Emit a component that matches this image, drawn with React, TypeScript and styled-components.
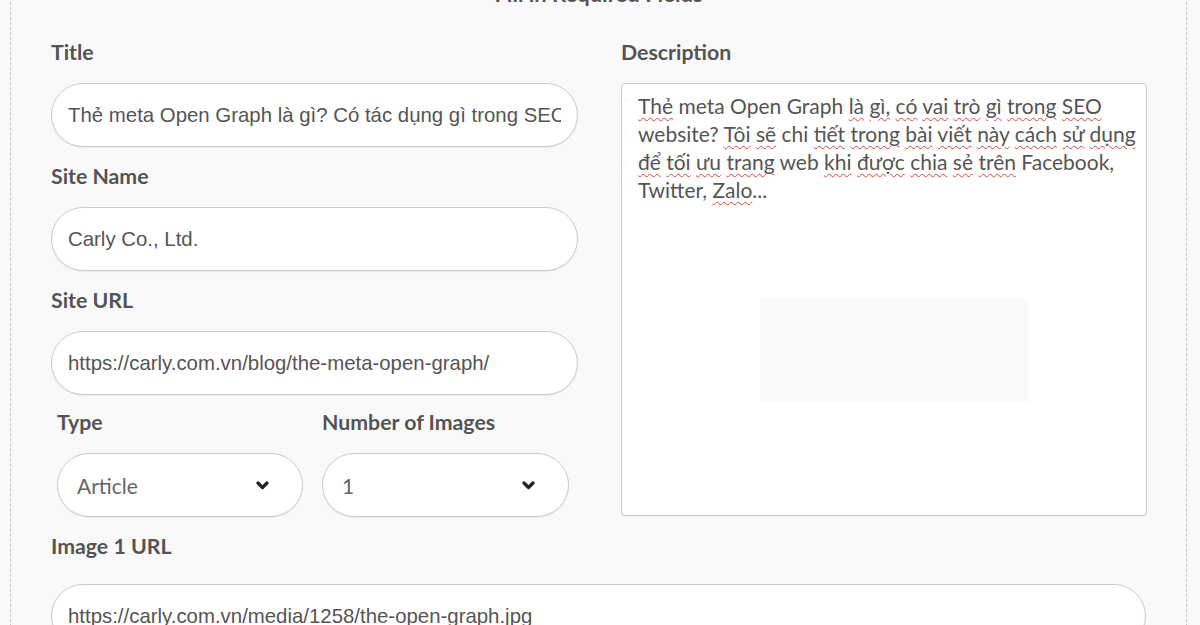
import React from "react";
import styled, { createGlobalStyle } from "styled-components";

const GlobalStyle = createGlobalStyle`
  html, body {
    margin: 0;
    padding: 0;
    background: #f9f9f9;
    overflow: hidden;
  }
  * { box-sizing: border-box; }
`;

const Page = styled.div`
  min-height: 625px;
  padding: 0 13px 0 10px;
  background: #f9f9f9;
`;

const Frame = styled.section`
  margin-top: -18px;
  min-height: 700px;
  border-left: 1.5px dashed #c4c4c4;
  border-right: 1.5px dashed #c4c4c4;
  padding: 0 40px 0 40px;
`;

const Heading = styled.h2`
  margin: 0;
  height: 58px;
  font-family: Lato, "Open Sans", sans-serif;
  font-weight: 700;
  font-size: 22px;
  line-height: 24px;
  color: #555;
  text-align: center;
`;

const Grid = styled.div`
  display: grid;
  grid-template-columns: 527px 526px;
  column-gap: 43px;
`;

const Column = styled.div`
  display: flex;
  flex-direction: column;
`;

const Field = styled.div<{ $top?: number }>`
  display: flex;
  flex-direction: column;
  margin-top: ${(p) => p.$top ?? 0}px;
`;

const Label = styled.label<{ $gap?: number }>`
  display: block;
  font-family: Lato, "Open Sans", sans-serif;
  font-weight: 700;
  font-size: 21.3px;
  line-height: 24px;
  color: #545454;
  margin-bottom: ${(p) => p.$gap ?? 19}px;
`;

const TextInput = styled.input`
  width: 100%;
  height: 64px;
  border: 1px solid #cbcbcb;
  border-radius: 32px;
  background: #fff;
  box-shadow: 0 1px 1px rgba(0, 0, 0, 0.06);
  padding: 0 16px 0 16px;
  font-family: "Liberation Sans", Arial, sans-serif;
  font-size: 20.4px;
  color: #555;
  outline: none;
`;

const SelectRow = styled.div`
  display: grid;
  grid-template-columns: 246px 247px;
  column-gap: 19px;
  padding-left: 6px;
  margin-top: 15px;
`;

const SelectBox = styled.div`
  height: 64px;
  border: 1px solid #cbcbcb;
  border-radius: 32px;
  background: #fff;
  box-shadow: 0 1px 1px rgba(0, 0, 0, 0.06);
  display: flex;
  align-items: center;
  justify-content: space-between;
  padding: 0 33px 0 19px;
  font-family: Lato, "Open Sans", sans-serif;
  font-size: 21px;
  color: #666;
`;

const ChevronSvg = styled.svg`
  width: 13px;
  height: 9px;
  flex: none;
`;

function Chevron() {
  return (
    <ChevronSvg viewBox="0 0 13 9" aria-hidden="true">
      <path
        d="M2 2 L6.5 6.5 L11 2"
        fill="none"
        stroke="#222"
        strokeWidth="3.2"
        strokeLinecap="round"
        strokeLinejoin="round"
      />
    </ChevronSvg>
  );
}

const TextArea = styled.div`
  position: relative;
  height: 433px;
  border: 1px solid #cbcbcb;
  border-radius: 4px;
  background: #fff;
  box-shadow: 0 1px 1px rgba(0, 0, 0, 0.05);
  padding: 8px 16px;
  font-family: Lato, "Open Sans", sans-serif;
  font-size: 21px;
  line-height: 28px;
  color: #555;
`;

const Line = styled.div`
  white-space: nowrap;
`;

const Misspelled = styled.span`
  text-decoration: underline wavy #e2403a;
  text-decoration-thickness: 1px;
  text-underline-offset: 3px;
`;

const Ghost = styled.div`
  position: absolute;
  left: 138px;
  top: 214px;
  width: 268px;
  height: 104px;
  background: #fafafa;
`;

const WideField = styled.div`
  margin-top: 17px;
`;

const description = [
  "~Thẻ meta Open Graph ~là ~gì, ~có ~vai ~trò ~gì ~trong ~SEO",
  "website? ~Tôi ~sẽ chi ~tiết ~trong ~bài ~viết ~này ~cách ~sử ~dụng",
  "~để ~tối ~ưu ~trang web ~khi ~được ~chia ~sẻ ~trên Facebook,",
  "Twitter, ~Zalo...",
];

function renderLine(line: string) {
  const words = line.split(" ");
  return words.map((w, i) => {
    const sep = i < words.length - 1 ? " " : "";
    if (w.startsWith("~")) {
      const raw = w.slice(1);
      const m = raw.match(/^(.*?)([.,]*)$/);
      const core = m ? m[1] : raw;
      const punct = m ? m[2] : "";
      const underlinePunct = punct === ",";
      return (
        <React.Fragment key={i}>
          <Misspelled>{underlinePunct ? core + punct : core}</Misspelled>
          {underlinePunct ? "" : punct}
          {sep}
        </React.Fragment>
      );
    }
    return (
      <React.Fragment key={i}>
        {w}
        {sep}
      </React.Fragment>
    );
  });
}

export default function App() {
  return (
    <>
      <GlobalStyle />
      <Page>
        <Frame>
          <Heading>Fill in Required Fields</Heading>
          <Grid>
            <Column>
              <Field>
                <Label>Title</Label>
                <TextInput
                  readOnly
                  value="Thẻ meta Open Graph là gì? Có tác dụng gì trong SEO website"
                />
              </Field>
              <Field $top={17}>
                <Label>Site Name</Label>
                <TextInput readOnly value="Carly Co., Ltd." />
              </Field>
              <Field $top={17}>
                <Label>Site URL</Label>
                <TextInput
                  readOnly
                  value="https://carly.com.vn/blog/the-meta-open-graph/"
                />
              </Field>
              <SelectRow>
                <Field>
                  <Label>Type</Label>
                  <SelectBox>
                    <span>Article</span>
                    <Chevron />
                  </SelectBox>
                </Field>
                <Field>
                  <Label>Number of Images</Label>
                  <SelectBox>
                    <span>1</span>
                    <Chevron />
                  </SelectBox>
                </Field>
              </SelectRow>
            </Column>
            <Column>
              <Field>
                <Label>Description</Label>
                <TextArea>
                  {description.map((l, i) => (
                    <Line key={i}>{renderLine(l)}</Line>
                  ))}
                  <Ghost />
                </TextArea>
              </Field>
            </Column>
          </Grid>
          <WideField>
            <Label $gap={26}>Image 1 URL</Label>
            <TextInput
              readOnly
              value="https://carly.com.vn/media/1258/the-open-graph.jpg"
            />
          </WideField>
        </Frame>
      </Page>
    </>
  );
}
